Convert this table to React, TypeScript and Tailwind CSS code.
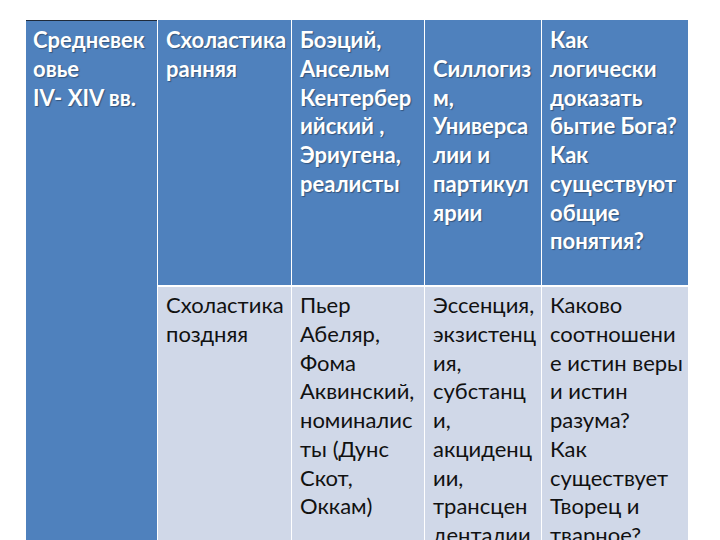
import React from 'react';

const headCells: string[][] = [
  ['Схоластика', 'ранняя'],
  ['Боэций,', 'Ансельм', 'Кентербер', 'ийский ,', 'Эриугена,', 'реалисты'],
  ['\u00a0', 'Силлогиз', 'м,', 'Универса', 'лии и', 'партикул', 'ярии'],
  ['Как', 'логически', 'доказать', 'бытие Бога?', 'Как', 'существуют', 'общие', 'понятия?'],
];

const lateCells: string[][] = [
  ['Схоластика', 'поздняя'],
  ['Пьер', 'Абеляр,', 'Фома', 'Аквинский,', 'номиналис', 'ты (Дунс', 'Скот,', 'Оккам)'],
  ['Эссенция,', 'экзистенц', 'ия,', 'субстанц', 'и,', 'акциденц', 'ии,', 'трансцен', 'денталии'],
  ['Каково', 'соотношени', 'е истин веры', 'и истин', 'разума?', 'Как', 'существует', 'Творец и', 'тварное?'],
];

const Lines = ({ lines }: { lines: string[] }) => (
  <>
    {lines.map((l, i) => (
      <div key={i} className="whitespace-nowrap">{l}</div>
    ))}
  </>
);

const App = () => {
  return (
    <div className="h-[540px] w-[720px] overflow-hidden bg-white pl-[26px] pt-[20px] font-['Lato','Noto_Sans',sans-serif] text-[22px] leading-[28.75px]">
      <div className="grid grid-cols-[131px_133px_132px_116px_146px] grid-rows-[265px_auto] gap-x-px gap-y-[2px] bg-white">
        <div className="row-span-2 border-t border-[#1f2a3a] bg-[#4f81bd] px-[7px] pt-[5px] font-bold text-white [text-shadow:1px_1px_1px_rgba(0,0,0,0.35)]">
          <Lines lines={['Средневек', 'овье', 'IV- XIV вв.']} />
        </div>
        {headCells.map((c, i) => (
          <div key={i} className="bg-[#4f81bd] px-[8px] pt-[6px] font-bold text-white [text-shadow:1px_1px_1px_rgba(0,0,0,0.35)]">
            <Lines lines={c} />
          </div>
        ))}
        {lateCells.map((c, i) => (
          <div key={i} className="bg-[#d0d8e8] px-[8px] pt-[4px] text-[#111]">
            <Lines lines={c} />
          </div>
        ))}
      </div>
    </div>
  );
};

export default App;
